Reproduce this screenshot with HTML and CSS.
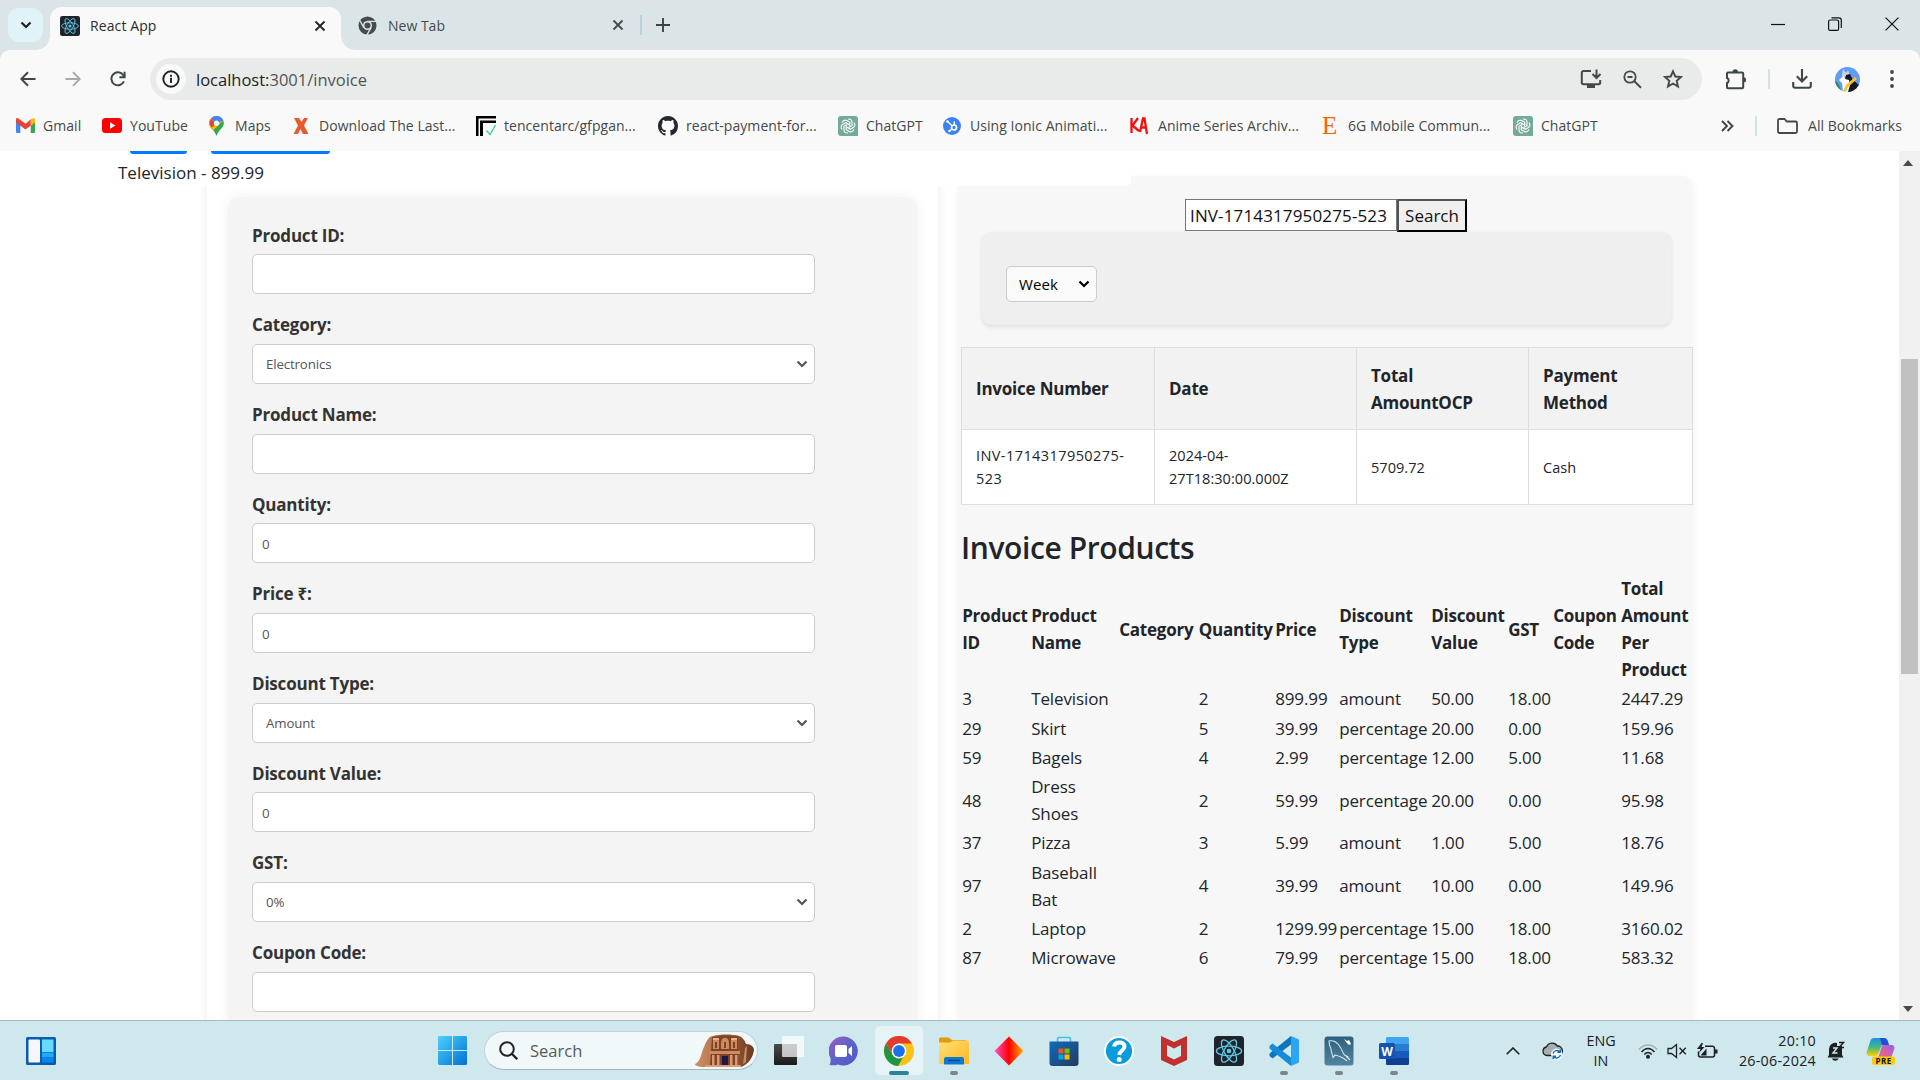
FILE: index.html
```html
<!DOCTYPE html>
<html lang="en">
<head>
<meta charset="utf-8">
<title>React App</title>
<link rel="stylesheet" href="styles.css">
</head>
<body>
<svg class="defs" width="0" height="0">
  <defs>
    <linearGradient id="g-win" x1="0" y1="0" x2="1" y2="1"><stop offset="0" stop-color="#4cd1fb"/><stop offset="1" stop-color="#0070d4"/></linearGradient>
    <linearGradient id="g-chat" x1="0" y1="0" x2="1" y2="1"><stop offset="0" stop-color="#a05ac0"/><stop offset=".5" stop-color="#5b63cc"/><stop offset="1" stop-color="#5656c8"/></linearGradient>
    <linearGradient id="g-dia" x1="0" y1="0" x2="1" y2="0"><stop offset="0" stop-color="#ff4fc8"/><stop offset=".5" stop-color="#ff0000"/><stop offset="1" stop-color="#ffb400"/></linearGradient>
    <linearGradient id="g-fold" x1="0" y1="0" x2="1" y2="1"><stop offset="0" stop-color="#ffe07a"/><stop offset="1" stop-color="#fdb81e"/></linearGradient>
    <linearGradient id="g-store" x1="0" y1="0" x2="1" y2="1"><stop offset="0" stop-color="#0f6cbd"/><stop offset="1" stop-color="#243a5e"/></linearGradient>
    <linearGradient id="g-sql" x1="0" y1="0" x2="0" y2="1"><stop offset="0" stop-color="#2d5f7e"/><stop offset="1" stop-color="#5383a0"/></linearGradient>
    <linearGradient id="g-rock" x1="0" y1="0" x2="1" y2="0"><stop offset="0" stop-color="#d29068"/><stop offset=".5" stop-color="#a5653e"/><stop offset="1" stop-color="#6a3a22"/></linearGradient>
    <linearGradient id="g-cop1" x1="0" y1="0" x2="0" y2="1"><stop offset="0" stop-color="#1c8fe8"/><stop offset=".5" stop-color="#3fb984"/><stop offset="1" stop-color="#ffd000"/></linearGradient>
    <linearGradient id="g-cop2" x1="1" y1="0" x2="0" y2="1"><stop offset="0" stop-color="#9a5cf0"/><stop offset="1" stop-color="#ff6a60"/></linearGradient>
    <linearGradient id="g-task" x1="0" y1="0" x2="0" y2="1"><stop offset="0" stop-color="#4a4a4a"/><stop offset="1" stop-color="#1a1a1a"/></linearGradient>
    <symbol id="react" viewBox="0 0 30 30">
      <rect width="30" height="30" rx="3.5" fill="#20232a"/>
      <g fill="none" stroke="#5cc8e6" stroke-width="1.3"><ellipse cx="15" cy="15" rx="12.6" ry="4.8"/><ellipse cx="15" cy="15" rx="12.6" ry="4.8" transform="rotate(60 15 15)"/><ellipse cx="15" cy="15" rx="12.6" ry="4.8" transform="rotate(120 15 15)"/></g>
      <circle cx="15" cy="15" r="2.3" fill="#5cc8e6"/>
    </symbol>
    <symbol id="gpt" viewBox="0 0 20 20">
      <path d="M3 0h14a3 3 0 0 1 3 3v17H3a3 3 0 0 1-3-3V3a3 3 0 0 1 3-3z" fill="#74aa9c"/>
      <g fill="none" stroke="#fff" stroke-width="1.1">
        <path d="M10 3.2c2.2-.6 4 .9 4 2.9v3.6L10.6 11.6"/>
        <path d="M10 3.2c2.2-.6 4 .9 4 2.9v3.6L10.6 11.6" transform="rotate(60 10 10)"/>
        <path d="M10 3.2c2.2-.6 4 .9 4 2.9v3.6L10.6 11.6" transform="rotate(120 10 10)"/>
        <path d="M10 3.2c2.2-.6 4 .9 4 2.9v3.6L10.6 11.6" transform="rotate(180 10 10)"/>
        <path d="M10 3.2c2.2-.6 4 .9 4 2.9v3.6L10.6 11.6" transform="rotate(240 10 10)"/>
        <path d="M10 3.2c2.2-.6 4 .9 4 2.9v3.6L10.6 11.6" transform="rotate(300 10 10)"/>
      </g>
    </symbol>
    <symbol id="chev" viewBox="0 0 12 8"><path d="M1.5 1.5L6 6l4.500-4.500" fill="none" stroke="currentColor" stroke-width="2.200"/></symbol>
    <symbol id="x" viewBox="0 0 12 12"><path d="M1.500 1.500l9 9M10.500 1.500l-9 9" fill="none" stroke="currentColor" stroke-width="1.800"/></symbol>
  </defs>
</svg>

<header class="tabs">
  <button class="tab-search"><svg width="12" height="8"><use href="#chev"/></svg></button>
  <div class="tab active">
    <svg width="20" height="20"><use href="#react"/></svg>
    <span class="tab-title t-react">React App</span>
    <svg class="tab-x" width="12" height="12"><use href="#x"/></svg>
  </div>
  <div class="tab idle">
    <svg width="19" height="19" viewBox="0 0 20 20"><circle cx="10" cy="10" r="9.500" fill="#474b4d"/><circle cx="10" cy="10" r="4.800" fill="#dbe5e7"/><circle cx="10" cy="10" r="3.200" fill="#474b4d"/><path d="M10 5.600h9M6.200 12.300L1.700 4.500M13.800 12.300l-4.500 7.800" stroke="#dbe5e7" stroke-width="1.400"/></svg>
    <span class="tab-title">New Tab</span>
    <svg class="tab-x" width="12" height="12"><use href="#x"/></svg>
  </div>
  <i class="tab-sep"></i>
  <svg class="plus" width="14" height="14" viewBox="0 0 14 14"><path d="M7 0v14M0 7h14" stroke="#3c4345" stroke-width="1.900"/></svg>
  <div class="win">
    <svg width="14" height="14" viewBox="0 0 14 14"><path d="M0 7.500h14" stroke="#111" stroke-width="1.200"/></svg>
    <svg width="14" height="14" viewBox="0 0 14 14"><rect x=".6" y="3" width="10" height="10.400" rx="1.500" fill="none" stroke="#111" stroke-width="1.200"/><path d="M3.500.8h7.500a2.300 2.300 0 0 1 2.300 2.300V11" fill="none" stroke="#111" stroke-width="1.200"/></svg>
    <svg width="14" height="14" viewBox="0 0 14 14"><path d="M.6.600l12.800 12.800M13.400.600L.6 13.400" stroke="#111" stroke-width="1.200"/></svg>
  </div>
</header>

<nav class="toolbar">
  <svg class="nav" width="16" height="16" viewBox="0 0 16 16"><path d="M15.500 8H1.500M8 1.200L1.300 8 8 14.800" fill="none" stroke="#3e4748" stroke-width="2"/></svg>
  <svg class="nav" width="16" height="16" viewBox="0 0 16 16"><path d="M.5 8h14M8 1.200L14.700 8 8 14.800" fill="none" stroke="#a6aaab" stroke-width="1.900"/></svg>
  <svg class="nav" width="16" height="16" viewBox="0 0 16 16"><path d="M13.900 10.300A6.500 6.500 0 1 1 13.300 4.200L14.800 6" fill="none" stroke="#3e4748" stroke-width="2"/><path d="M15.600.7v6.500H9.400v-2h4.200V.7z" fill="#3e4748"/></svg>
  <div class="omnibox">
    <span class="info"><svg width="18" height="18" viewBox="0 0 18 18"><circle cx="9" cy="9" r="7.700" fill="none" stroke="#1f2324" stroke-width="1.900"/><path d="M9 7.800v5.200M9 4.700v2" stroke="#1f2324" stroke-width="1.900"/></svg></span>
    <span class="url">localhost:<em>3001/invoice</em></span>
    <svg width="22" height="20" viewBox="0 0 22 20"><path d="M11 2H3.500A1.700 1.700 0 0 0 1.800 3.700v9.800a1.700 1.700 0 0 0 1.700 1.700h15a1.700 1.700 0 0 0 1.700-1.700V11M16.500.5v8M12.500 5l4 4 4-4" fill="none" stroke="#444849" stroke-width="2"/><path d="M7 15h8v4H7z" fill="#444849"/></svg>
    <svg width="19" height="19" viewBox="0 0 19 19"><circle cx="7" cy="7" r="5.700" fill="none" stroke="#444849" stroke-width="1.800"/><path d="M4.500 7h5M11.300 11.300l6.700 6.500" stroke="#444849" stroke-width="1.900"/></svg>
    <svg width="20" height="20" viewBox="0 0 20 20"><path d="M10 2.300l2.300 5.200 5.700.500-4.300 3.800 1.300 5.700-5-3-5 3 1.300-5.700L2 8l5.700-.500z" fill="none" stroke="#444849" stroke-width="1.900"/></svg>
  </div>
  <svg class="puzzle" width="22" height="22" viewBox="0 0 22 22"><path d="M3 4.500h14.200a1 1 0 0 1 1 1v13.700a1 1 0 0 1-1 1H3a1 1 0 0 1-1-1v-4.200a2.700 2.700 0 0 0 0-5V5.500a1 1 0 0 1 1-1z" fill="none" stroke="#3e4748" stroke-width="2"/><path d="M7.500 4a2.700 2.700 0 0 1 5.400 0zM18.500 9.200a2.600 2.600 0 0 1 0 5.200z" fill="#3e4748"/></svg>
  <i class="bar-sep"></i>
  <svg class="dl" width="20" height="20" viewBox="0 0 20 20"><path d="M10 0v12M4.800 7.300L10 12.500l5.200-5.200M1.200 13v3.700a2 2 0 0 0 2 2h13.600a2 2 0 0 0 2-2V13" fill="none" stroke="#3e4748" stroke-width="2.100"/></svg>
  <svg class="avatar" width="25" height="25" viewBox="0 0 25 25"><defs><clipPath id="av"><circle cx="12.500" cy="12.500" r="12.500"/></clipPath></defs><g clip-path="url(#av)"><path fill="#5f9cf5" d="M0 0h25v25H0z"/><path fill="#2e8b57" d="M0 14l3 2 4 9H0z"/><path fill="#cfd6da" d="M7 9l1-7 3 4 2-3 2 6z"/><path fill="#16191c" d="M11 8l4-1 3 6 6 5v7H12l2-9-4-3z"/><path fill="#fff" d="M9 8l-5 5 3 3 1 9h5l2-7-1-5-4-1z"/><path fill="#ffc02e" d="M20 10l2 2-9 8-2 5-3-1 3-6z"/></g></svg>
  <svg class="dots" width="4" height="18" viewBox="0 0 4 18"><g fill="#3e4748"><circle cx="2" cy="2" r="1.900"/><circle cx="2" cy="9" r="1.900"/><circle cx="2" cy="16" r="1.900"/></g></svg>
</nav>

<nav class="bookmarks">
  <a><svg width="19" height="15" viewBox="0 0 19 15"><path d="M0 2v11.500A1.300 1.300 0 0 0 1.300 15H4.300V6z" fill="#4285f4"/><path d="M19 2v11.500a1.300 1.300 0 0 1-1.300 1.500h-3V6z" fill="#34a853"/><path d="M14.700 1.300L17 .200A1.500 1.500 0 0 1 19 2v2.400L14.700 7.700z" fill="#fbbc04"/><path d="M0 2A1.500 1.500 0 0 1 2.500.5l7 5.200 5.200-4.200v6.200L9.500 11.500 0 4.400z" fill="#ea4335"/></svg><span>Gmail</span></a>
  <a><svg width="20" height="15" viewBox="0 0 20 15"><rect width="20" height="15" rx="3.500" fill="#f00"/><path d="M8 4.200l5.500 3.300L8 10.800z" fill="#fff"/></svg><span>YouTube</span></a>
  <a><svg width="15" height="20" viewBox="0 0 15 20"><path d="M7.500 0a7.300 7.300 0 0 1 7.300 7.300c0 5-5 6-7.300 12.700C5.200 13.300.2 12.300.2 7.300A7.300 7.300 0 0 1 7.500 0z" fill="#34a853"/><path d="M7.500 0a7.300 7.300 0 0 1 6.800 4.500L4 14.500C2 12 .2 11 .2 7.300A7.300 7.300 0 0 1 7.500 0z" fill="#fbbc04"/><path d="M1.800 2.800L7 7.500 3 11.500C.5 9-.5 6 1.800 2.800z" fill="#ea4335"/><path d="M1.800 2.800A7.300 7.300 0 0 1 14.300 4.500L7.500 7.500z" fill="#4285f4"/><circle cx="7.500" cy="7.200" r="2.600" fill="#fff"/></svg><span>Maps</span></a>
  <a><svg width="16" height="16" viewBox="0 0 16 16"><path d="M1 0h5l2.500 4L11 0h4l-4 7.500L15.500 16H10L7.500 11 5 16H.5L5 7.500z" fill="#e65a2b"/></svg><span>Download The Last...</span></a>
  <a><svg width="20" height="20" viewBox="0 0 20 20"><path d="M0 0h20v2.500H2.500V20H0z" fill="#000"/><path d="M4 4.500h16V7H7v13H4z" fill="#000"/><path d="M10.500 14.500l3.500 4 5.500-9.500" fill="none" stroke="#42d392" stroke-width="1.400"/></svg><span>tencentarc/gfpgan...</span></a>
  <a><svg width="20" height="20" viewBox="0 0 16 16"><path fill="#24292f" d="M8 0C3.580 0 0 3.580 0 8c0 3.540 2.290 6.530 5.470 7.590.4.070.55-.170.55-.380 0-.190-.010-.820-.010-1.490-2.010.370-2.530-.490-2.690-.940-.090-.230-.480-.940-.820-1.130-.280-.150-.680-.520-.010-.530.630-.010 1.080.580 1.230.820.720 1.210 1.870.870 2.330.660.070-.520.280-.870.510-1.070-1.780-.200-3.640-.890-3.640-3.950 0-.870.310-1.590.820-2.150-.080-.200-.360-1.020.080-2.120 0 0 .67-.210 2.200.820.640-.180 1.320-.270 2-.270s1.360.090 2 .270c1.530-1.040 2.200-.820 2.200-.820.440 1.100.16 1.920.080 2.120.51.560.82 1.270.82 2.150 0 3.070-1.870 3.750-3.650 3.950.29.250.54.730.54 1.480 0 1.070-.010 1.930-.010 2.200 0 .210.15.460.55.380A8 8 0 0 0 16 8c0-4.420-3.580-8-8-8z"/></svg><span>react-payment-for...</span></a>
  <a><svg width="20" height="20"><use href="#gpt"/></svg><span>ChatGPT</span></a>
  <a><svg width="18" height="18" viewBox="0 0 18 18"><circle cx="9" cy="9" r="9" fill="#3b82f6"/><circle cx="11" cy="10.500" r="2.500" fill="none" stroke="#fff" stroke-width="1.700"/><path d="M4.500 4.500L9 8.700M11.300 4.500V8M6.500 14l2.500-2" stroke="#fff" stroke-width="1.500"/><circle cx="4.500" cy="4.500" r="1.300" fill="#fff"/><circle cx="6.400" cy="14" r="1.200" fill="#fff"/></svg><span>Using Ionic Animati...</span></a>
  <a><svg width="18" height="18" viewBox="0 0 18 18"><path d="M1.500 1v15M8 1L2.500 8.500 9 14M10 15l3-13.500h1.500L17 17M11 10.500h5" fill="none" stroke="#f01010" stroke-width="2.300"/></svg><span>Anime Series Archiv...</span></a>
  <a><b class="etsy">E</b><span>6G Mobile Commun...</span></a>
  <a><svg width="20" height="20"><use href="#gpt"/></svg><span>ChatGPT</span></a>
  <svg class="more" width="13" height="12" viewBox="0 0 13 12"><path d="M1 1l5 5-5 5M6.500 1l5 5-5 5" fill="none" stroke="#3e4748" stroke-width="1.900"/></svg>
  <i class="bm-sep"></i>
  <a><svg width="21" height="16" viewBox="0 0 21 16"><path d="M2.500 1h5l2.300 2.500h8.700A1.500 1.500 0 0 1 20 5v8.500a1.500 1.500 0 0 1-1.500 1.500h-16A1.500 1.500 0 0 1 1 13.500v-11A1.500 1.500 0 0 1 2.500 1z" fill="none" stroke="#444849" stroke-width="1.800"/></svg><span>All Bookmarks</span></a>
</nav>

<div class="viewport">
  <main class="page">
    <div class="buttons"><i></i><i></i></div>
    <div class="suggestion">Television - 899.99</div>
    <div class="columns">
      <section class="left-card">
        <form class="form">
          <label>Product ID:</label><input type="text">
          <label>Category:</label><div class="select">Electronics<svg width="12" height="8"><use href="#chev"/></svg></div>
          <label>Product Name:</label><input type="text">
          <label>Quantity:</label><input type="text" value="0">
          <label>Price ₹:</label><input type="text" value="0">
          <label>Discount Type:</label><div class="select">Amount<svg width="12" height="8"><use href="#chev"/></svg></div>
          <label>Discount Value:</label><input type="text" value="0">
          <label>GST:</label><div class="select">0%<svg width="12" height="8"><use href="#chev"/></svg></div>
          <label>Coupon Code:</label><input type="text">
        </form>
      </section>
      <section class="right-card">
        <div class="search"><input type="text" value="INV-1714317950275-523"><button>Search</button></div>
        <div class="filter"><div class="period">Week<svg width="12" height="8"><use href="#chev"/></svg></div></div>
        <table class="invoices">
          <colgroup><col class="i1"><col class="i2"><col class="i3"><col class="i4"></colgroup>
          <tr><th>Invoice Number</th><th>Date</th><th>Total<br>AmountOCP</th><th>Payment<br>Method</th></tr>
          <tr><td class="number">INV-1714317950275-<br>523</td><td>2024-04-<br>27T18:30:00.000Z</td><td>5709.72</td><td>Cash</td></tr>
        </table>
        <h2>Invoice Products</h2>
        <table class="products">
          <colgroup><col class="p1"><col class="p2"><col class="p3"><col class="p4"><col class="p5"><col class="p6"><col class="p7"><col class="p8"><col class="p9"><col class="p10"></colgroup>
          <tr><th>Product<br>ID</th><th>Product<br>Name</th><th>Category</th><th>Quantity</th><th>Price</th><th>Discount<br>Type</th><th>Discount<br>Value</th><th>GST</th><th>Coupon<br>Code</th><th>Total<br>Amount<br>Per<br>Product</th></tr>
          <tr><td>3</td><td>Television</td><td></td><td>2</td><td>899.99</td><td>amount</td><td>50.00</td><td>18.00</td><td></td><td>2447.29</td></tr>
          <tr><td>29</td><td>Skirt</td><td></td><td>5</td><td>39.99</td><td>percentage</td><td>20.00</td><td>0.00</td><td></td><td>159.96</td></tr>
          <tr><td>59</td><td>Bagels</td><td></td><td>4</td><td>2.99</td><td>percentage</td><td>12.00</td><td>5.00</td><td></td><td>11.68</td></tr>
          <tr><td>48</td><td>Dress<br>Shoes</td><td></td><td>2</td><td>59.99</td><td>percentage</td><td>20.00</td><td>0.00</td><td></td><td>95.98</td></tr>
          <tr><td>37</td><td>Pizza</td><td></td><td>3</td><td>5.99</td><td>amount</td><td>1.00</td><td>5.00</td><td></td><td>18.76</td></tr>
          <tr><td>97</td><td>Baseball<br>Bat</td><td></td><td>4</td><td>39.99</td><td>amount</td><td>10.00</td><td>0.00</td><td></td><td>149.96</td></tr>
          <tr><td>2</td><td>Laptop</td><td></td><td>2</td><td>1299.99</td><td>percentage</td><td>15.00</td><td>18.00</td><td></td><td>3160.02</td></tr>
          <tr><td>87</td><td>Microwave</td><td></td><td>6</td><td>79.99</td><td>percentage</td><td>15.00</td><td>18.00</td><td></td><td>583.32</td></tr>
        </table>
      </section>
    </div>
  </main>
  <aside class="scroll">
    <svg width="10" height="6" viewBox="0 0 10 6"><path d="M5 0l5 6H0z" fill="#4a4a4a"/></svg>
    <i></i>
    <svg width="10" height="6" viewBox="0 0 10 6"><path d="M0 0h10L5 6z" fill="#4a4a4a"/></svg>
  </aside>
</div>

<footer class="taskbar">
  <svg class="widgets" width="30" height="28" viewBox="0 0 30 28"><rect width="30" height="28" rx="1.500" fill="#0a5cad"/><rect x="2.500" y="2.500" width="11.500" height="23" rx="1" fill="#f5f7f9"/><path d="M16 2.500h11.500v12.500H16z" fill="#66d9ff"/><path d="M16 15.500h11.500v5H16z" fill="#22a7ff"/><path d="M16 21h11.500v4.500H16z" fill="#0a84f0"/></svg>
  <svg class="start" width="29" height="29" viewBox="0 0 29 29"><path d="M1 0h13v14H0V1zM15 0h13l1 1v13H15zM0 15h14v14H1l-1-1zM15 15h14v13l-1 1H15z" fill="url(#g-win)"/></svg>
  <div class="finder">
    <svg width="19" height="19" viewBox="0 0 19 19"><circle cx="8" cy="8" r="6.800" fill="none" stroke="#222" stroke-width="2"/><path d="M12.800 12.800l5.400 5.400" stroke="#222" stroke-width="2.300"/></svg>
    <span>Search</span>
    <svg class="petra" width="60" height="34" viewBox="0 0 60 34"><path d="M0 30c6-3 6-11 9-17C12 5 15 2 18 2c6-2 20-2 26 0 3 1 6 4 7 8 5 0 8 3 8 6-1 7-5 14-13 17H9c-5 0-9-1-9-3z" fill="url(#g-rock)"/><path d="M17 3l13-2 13 2v29H15z" fill="#7d4326"/><path d="M18 4h6v11h-6zM36 4h6v11h-6zM26 9c0-7 8-7 8 0v6h-8zM14 17h31v3H14z" fill="#d08a60"/><path d="M20 8h2v6h-2zM38 8h2v6h-2zM29 8h2v6h-2z" fill="#7d4326"/><path d="M18 4h6v2h-6zM36 4h6v2h-6z" fill="#efb088"/><path d="M17 21h2.500v11H17zM22 21h2.500v11H22zM35 21h2.500v11H35zM40 21h2.500v11H40z" fill="#dc9870"/><path d="M27 22h6v9h-6z" fill="#1f1748"/><path d="M10 31h36v2H10z" fill="#df9b6e"/><path d="M50 14l2-2-1 16-3 2z" fill="#c98962"/></svg>
  </div>
  <div class="apps">
    <span><svg width="30" height="30" viewBox="0 0 30 30"><rect x="0" y="8" width="23" height="21" rx="1" fill="url(#g-task)"/><rect x="8" y="0" width="22" height="21" rx="1" fill="#fff" opacity=".72"/></svg></span>
    <span><svg width="30" height="30" viewBox="0 0 30 30"><path d="M15 .5A14.500 14.500 0 1 1 9 28.500c-3 1-6 1-8.500.5 1-2 1.300-4 1-7A14.500 14.500 0 0 1 15 .5z" fill="url(#g-chat)"/><rect x="6" y="9" width="12" height="12" rx="2" fill="#fff"/><path d="M19.500 13l3.500-3v10l-3.500-3z" fill="#fff"/></svg></span>
    <span class="current"><svg width="30" height="30" viewBox="0 0 30 30"><circle cx="15" cy="15" r="15" fill="#fbc116"/><path d="M15 15L8.500 19 2 7.500A15 15 0 0 0 14 30l6.700-11.500z" fill="#1e9544"/><path d="M2 7.500A15 15 0 0 1 28 7.500H15L8.500 18.700z" fill="#e33b2e"/><circle cx="15" cy="15" r="7.400" fill="#fff"/><circle cx="15" cy="15" r="5.900" fill="#1a73e8"/></svg></span>
    <span class="open"><svg width="30" height="28" viewBox="0 0 30 28"><path d="M0 5V2a1.500 1.500 0 0 1 1.500-1.500h8L13 3h14v5H0z" fill="#e19a08"/><path d="M0 5.500h11l3-2h14.500A1.500 1.500 0 0 1 30 5v21a1 1 0 0 1-1 1H1a1 1 0 0 1-1-1z" fill="url(#g-fold)"/><path d="M5 27.500V22a2 2 0 0 1 2-2h16a2 2 0 0 1 2 2v5.500z" fill="#0f78d0"/><path d="M9 23.500h12" stroke="#0a4d8f" stroke-width="1.500"/></svg></span>
    <span><svg width="30" height="30" viewBox="0 0 30 30"><path d="M15 .5L29.500 15 15 29.500.5 15z" fill="url(#g-dia)"/></svg></span>
    <span><svg width="30" height="30" viewBox="0 0 30 30"><path d="M8.500 8V3A1.500 1.500 0 0 1 10 1.500h10A1.500 1.500 0 0 1 21.500 3v5" fill="none" stroke="#3cc3f5" stroke-width="1.600"/><path d="M.5 5.500h29V27a3 3 0 0 1-3 3h-23a3 3 0 0 1-3-3z" fill="url(#g-store)"/><path d="M9.500 12.500h5v5h-5z" fill="#f25022"/><path d="M15.500 12.500h5v5h-5z" fill="#7fba00"/><path d="M9.500 18.500h5v5h-5z" fill="#00a4ef"/><path d="M15.500 18.500h5v5h-5z" fill="#ffb900"/></svg></span>
    <span><svg width="30" height="30" viewBox="0 0 30 30"><circle cx="15" cy="15" r="14" fill="#0a9bdc" stroke="#fff" stroke-width="1.800"/><path d="M10 10.500c1-5.500 10.500-5.500 10.500 0 0 4-5 4-5.300 8.500" fill="none" stroke="#fff" stroke-width="4"/><circle cx="15.200" cy="23.500" r="2.500" fill="#fff"/></svg></span>
    <span><svg width="28" height="30" viewBox="0 0 28 30"><path d="M1 0l13 6L27 0v24l-13 6-13-6zM7 9v11l7 3.500 7-3.500V9l-7 3.500z" fill="#c0302c" fill-rule="evenodd"/></svg></span>
    <span><svg width="30" height="30"><use href="#react"/></svg></span>
    <span class="open"><svg width="30" height="30" viewBox="0 0 30 30"><path d="M22 0v8.500L3.500 22.500.5 20v-2.500L22 0z" fill="#0d76bd"/><path d="M22 30v-8.500L3.500 7.500.5 10v2.500L22 30z" fill="#168cd8"/><path d="M22 0l7 3a1.500 1.500 0 0 1 1 1.500v21a1.500 1.500 0 0 1-1 1.500l-7 3z" fill="#2ba6f2"/></svg></span>
    <span class="open"><svg width="30" height="30" viewBox="0 0 30 30"><rect x=".5" y=".5" width="29" height="29" rx="3" fill="url(#g-sql)"/><path d="M4.500 5c5-1 9 2 11 5 3 4 3 7 5 9l4 2M9 22c0-3-2-5-2-9M5 5c0 4 1 6 2 8M9 22l2-3c4 1 8 2 12 6M22 20l4 4" fill="none" stroke="#d9e6ee" stroke-width="1.100"/><path d="M20 3l2 3 3 3 2-1-2-4-2 1z" fill="#fff"/></svg></span>
    <span class="open"><svg width="30" height="28" viewBox="0 0 30 28"><path d="M8 0h20.500A1.500 1.500 0 0 1 30 1.500V7H7V1z" fill="#41a5ee"/><path d="M7 7h23v7H7z" fill="#2b7cd3"/><path d="M7 14h23v7H7z" fill="#185abd"/><path d="M7 21h23v5.500a1.500 1.500 0 0 1-1.500 1.500H8a1 1 0 0 1-1-1z" fill="#103f91"/><rect y="6" width="16" height="16" rx="1.500" fill="#1652b0"/><text x="8" y="18.500" text-anchor="middle" class="word">W</text></svg></span>
  </div>
  <div class="tray">
    <svg class="up" width="14" height="8" viewBox="0 0 14 8"><path d="M.7 7.300L7 1l6.300 6.300" fill="none" stroke="#1b2023" stroke-width="1.600"/></svg>
    <svg class="cloud" width="21" height="18" viewBox="0 0 21 18"><path d="M5 13.500a4.300 4.300 0 0 1-.5-8.500 6 6 0 0 1 10.800-1A4.700 4.700 0 0 1 16 13.500z" fill="#a8adb0" stroke="#1d2225" stroke-width="1.300"/><circle cx="14.700" cy="12.200" r="5.600" fill="#fff"/><path d="M11 11.500a4 4 0 0 1 7-1.500M18.500 12.800a4 4 0 0 1-7 1.700M18.300 7.500V10.300h-2.800M11.200 17v-2.800H14" fill="none" stroke="#1668b8" stroke-width="1.400"/></svg>
    <div class="lang">ENG<br>IN</div>
    <svg class="wifi" width="20" height="16" viewBox="0 0 20 16"><path d="M1 6.500c5-6 13-6 18 0" fill="none" stroke="#9fb2b8" stroke-width="1.500"/><path d="M3.500 9c4-4.700 9-4.700 13 0M6.300 11.500c2.400-2.700 5-2.700 7.400 0" fill="none" stroke="#1b2023" stroke-width="1.500"/><circle cx="10" cy="13.800" r="2" fill="#1b2023"/></svg>
    <svg class="sound" width="20" height="16" viewBox="0 0 20 16"><path d="M1 5.500h3.500L9.500 1.500v13l-5-4H1z" fill="none" stroke="#1b2023" stroke-width="1.300"/><path d="M12.500 4.700l6.300 6.500M18.800 4.700l-6.300 6.500" stroke="#1b2023" stroke-width="1.300"/></svg>
    <svg class="battery" width="21" height="16" viewBox="0 0 21 16"><path d="M8 3.200h7.500a2 2 0 0 1 2 2V12a2 2 0 0 1-2 2H3.500a2 2 0 0 1-2-2V8.500" fill="none" stroke="#1b2023" stroke-width="1.500"/><path d="M18 6.500h2.500v4H18zM4.500 0L0 6h3.500L2 10l5.500-6H4.500L6 0zM3.500 12.500l6-7v7z" fill="#1b2023"/></svg>
    <div class="clock">20:10<br>26-06-2024</div>
    <svg class="bell" width="18" height="20" viewBox="0 0 18 20"><path d="M2 14V8a6.500 6.500 0 0 1 8-6v3h5v9l1.500 2.500H.5zM5 17.500h6.500c-1 3-5.500 3-6.500 0z" fill="#1b2023"/><path d="M12 1.500h4.500L12 6.500h5" fill="none" stroke="#1b2023" stroke-width="1.500"/><path d="M6 7h4l-4 5h4.500" fill="none" stroke="#cfe8ee" stroke-width="1.400"/></svg>
    <svg class="copilot" width="29" height="28" viewBox="0 0 29 28"><path d="M8 1h10c2 0 3 1 4 4l1 3h-5c-3 0-3 2-4 5l-2 4c-1 2-2 2-4 2H4c-3 0-4-2-3-5l3-9c1-3 2-4 4-4z" fill="url(#g-cop1)"/><path d="M14 1h4c2 0 3 1 4 4l1 3h-7z" fill="#2350d8"/><path d="M18 8h7c3 0 4 2 3 5l-3 8H12l3-9c1-3 1-4 3-4z" fill="url(#g-cop2)"/><rect x="6" y="19.500" width="23" height="8.500" rx="2" fill="#ffc90e"/><text x="17.700" y="26.700" text-anchor="middle" class="pre">PRE</text></svg>
  </div>
</footer>
</body>
</html>
```
FILE: styles.css
```css
* { box-sizing: border-box; }
body {
  margin: 0;
  width: 1920px;
  height: 1080px;
  overflow: hidden;
  display: flex;
  flex-direction: column;
  background: #fff;
  font-family: "Open Sans", "Noto Sans", sans-serif;
  color: #212529;
}
svg { display: block; flex: none; }
.defs { position: absolute; }
i { flex: none; }

/* tab strip */
.tabs { height: 58px; margin-bottom: -8px; background: #dbe5e7; display: flex; align-items: flex-start; flex: none; }
.tab-search { width: 35px; height: 34px; margin: 8px 7px 0 8px; border: 0; padding: 0; border-radius: 11px; background: #e0f3f8; color: #1b2022; display: grid; place-items: center; }
.tab { display: flex; align-items: center; height: 43px; margin-top: 7px; padding-bottom: 7px; font-size: 14px; color: #454a4c; position: relative; }
.tab.active { width: 291px; padding-left: 10px; background: #f9f9f9; border-radius: 12px 12px 0 0; color: #2a2d2e; padding-bottom: 6px; }
.tab.active::before, .tab.active::after { content: ""; position: absolute; bottom: 0; width: 14px; height: 14px; }
.tab.active::before { left: -14px; background: radial-gradient(circle at 0 0, transparent 13.5px, #f9f9f9 14px); }
.tab.active::after { right: -14px; background: radial-gradient(circle at 100% 0, transparent 13.5px, #f9f9f9 14px); }
.tab.idle { width: 300px; padding-left: 17px; }
.tab-title { margin-left: 11px; white-space: nowrap; flex: 1; }
.t-react { margin-left: 10px; letter-spacing: .1px; }
.tab-x { margin-right: 15px; color: #1f2324; }
.idle .tab-x { margin-right: 17px; color: #45494b; }
.tab-sep { width: 2px; height: 20px; margin-top: 15px; background: #bdd2d8; margin-left: -1px; }
.plus { margin: 18px 0 0 14px; }
.win { display: flex; gap: 43px; margin: 17px 21px 0 auto; }

/* address row */
.toolbar { height: 50px; flex: none; background: #f9f9f9; border-radius: 10px 10px 0 0; position: relative; display: flex; align-items: center; padding: 8px 26px 0 20px; }
.nav { margin-right: 29px; }
.omnibox { width: 1552px; height: 42px; margin-left: -5px; border-radius: 21px; background: #e8ebea; display: flex; align-items: center; padding: 0 19px 0 6px; gap: 21px; }
.info { width: 30px; height: 30px; border-radius: 50%; background: #f9f9f9; display: grid; place-items: center; }
.url { flex: 1; margin-left: -11px; font-size: 16.500px; color: #1f2324; }
.url em { font-style: normal; color: #505456; }
.puzzle { margin-left: 23px; }
.bar-sep { width: 2px; height: 20px; margin: 0 22px 0 21px; background: #cde4ea; }
.avatar { margin-left: 23px; }
.dots { margin-left: 30px; }

/* bookmarks row */
.bookmarks {
  height: 51px; flex: none; background: #f9f9f9; padding-left: 16px; align-items: center;
  display: grid;
  grid-template-columns: 86px 107px 84px 183px 182px 180px 105px 187px 192px 191px 208px 34px 22px 130px;
}
.bookmarks a { display: flex; align-items: center; gap: 8px; white-space: nowrap; font-size: 14px; letter-spacing: .05px; color: #454849; }
.bookmarks a:nth-child(3) { gap: 11px; }
.bookmarks a:nth-child(4), .bookmarks a:nth-child(9), .bookmarks a:nth-child(10), .bookmarks a:last-child { gap: 10px; }
.bookmarks a:nth-child(8) { gap: 9px; }
.etsy { width: 16px; font: 25px/20px "Liberation Serif", serif; color: #f56400; }
.bm-sep { width: 2px; height: 20px; background: #cde4ea; }

/* web page */
.viewport { height: 869px; flex: none; display: flex; overflow: hidden; }
.page { width: 1899px; position: relative; font-size: 17px; line-height: 27px; letter-spacing: -0.1px; }
.buttons { display: flex; gap: 24px; padding-left: 130px; height: 3px; margin-bottom: 22px; }
.buttons i { background: #007bff; border-radius: 0 0 4px 4px; width: 57px; }
.buttons i + i { width: 119px; }
.suggestion { position: absolute; left: 118px; top: 8px; width: 1013px; height: 27px; background: #fff; border-radius: 5px; z-index: 2; letter-spacing: 0; }
.columns { display: flex; gap: 21px; padding-left: 207px; height: 900px; }
.left-card { width: 731px; padding: 21px 21px 0; background: #fff; border-radius: 9px; box-shadow: 0 0 11px rgba(0,0,0,.08); }
.form { height: 880px; padding: 24.500px 24px 0; background: #f4f4f4; border-radius: 11px; box-shadow: 0 0 14px rgba(0,0,0,.06); }
.form label { display: block; height: 27px; margin-bottom: 5.700px; font-weight: 700; color: #333; letter-spacing: -0.2px; }
.form input, .select { display: flex; align-items: center; width: 563px; height: 40px; margin: 0 0 17px; padding: 2px 9px 0; border: 1px solid #ccc; border-radius: 5px; background: #fff; font: 13.300px "Open Sans", sans-serif; color: #555; }
.select { padding: 0 6px 0 13px; justify-content: space-between; letter-spacing: -0.15px; }
.right-card { width: 734px; background: #f7f7f7; border-radius: 11px; padding: 23px 1px 0 2px; box-shadow: 0 3px 8px rgba(0,0,0,.06); }
.search { display: flex; height: 33px; padding-left: 224px; }
.search input { width: 212px; height: 32px; border: 1px solid #767676; padding: 0 4px; background: #fff; font: 17px "Open Sans", sans-serif; color: #111; letter-spacing: .14px; }
.search button { width: 70px; height: 33px; padding: 0; border: 2px outset #000; background: #efefef; font: 17px "Open Sans", sans-serif; color: #111; }
.filter { height: 93px; margin: 0 21px 22px; padding: 34px 24px; background: #efefef; border-radius: 9px; box-shadow: 0 2px 4px rgba(0,0,0,.1); }
.period { width: 91px; height: 36px; padding: 0 6px 0 12px; display: flex; align-items: center; justify-content: space-between; border: 1px solid #ccc; border-radius: 5px; background: #fafafa; color: #000; font-size: 15px; letter-spacing: .1px; }
table { border-collapse: collapse; table-layout: fixed; width: 731px; }
th { text-align: left; font-weight: 700; letter-spacing: -0.22px; }
.invoices { width: 730.500px; }
.invoices th, .invoices td { border: 1px solid #ddd; padding: 0 0 0 14px; }
.invoices th { height: 82px; background: #f2f2f2; }
.invoices td { height: 75px; background: #fff; font-size: 14.500px; line-height: 23px; letter-spacing: .05px; }
.invoices .number { letter-spacing: .42px; }
.i1 { width: 193px; } .i2 { width: 202px; } .i3 { width: 172px; } .i4 { width: 163.500px; }
h2 { margin: 23px 0 7px; font-size: 30px; line-height: 39px; font-weight: 600; letter-spacing: -0.4px; }
.products th, .products td { padding: 1.125px; white-space: nowrap; }
.p1 { width: 69px; } .p2 { width: 88px; } .p3 { width: 79.500px; } .p4 { width: 76.500px; } .p5 { width: 64px; }
.p6 { width: 92px; } .p7 { width: 77px; } .p8 { width: 45px; } .p9 { width: 68px; } .p10 { width: 72px; }

/* scrollbar */
.scroll { width: 21px; background: #f1f1f1; display: flex; flex-direction: column; align-items: center; padding: 9px 3px 8px 0; }
.scroll i { width: 17px; height: 315px; background: #c1c1c1; margin: 193px 0 auto 3px; }

/* taskbar */
.taskbar { height: 60px; flex: none; background: #cfe8ee; border-top: 1px solid #a9b8bd; display: flex; align-items: center; padding: 0 25px 0 26px; position: relative; z-index: 3; }
.start { margin: 0 17px 0 382px; }
.finder { width: 274px; height: 39px; border-radius: 20px; background: #f0f8fa; border: 1px solid #bdd3da; border-bottom-color: #a3b9c0; display: flex; align-items: center; padding: 0 2px 0 14px; font-size: 16.500px; color: #545b5e; }
.finder span { flex: 1; margin-left: 12px; }
.apps { display: flex; margin-left: 3px; }
.apps span { width: 55px; height: 59px; display: grid; place-items: center; position: relative; }
.current::before { content: ""; position: absolute; left: 3.500px; top: 5px; width: 48px; height: 49px; border-radius: 5px; background: #e6f3f7; }
.current svg { position: relative; }
.current::after, .open::after { content: ""; position: absolute; bottom: 5px; left: 23.500px; width: 8px; height: 4px; border-radius: 2px; background: #7a868a; }
.current::after { width: 20px; left: 17.500px; background: #2a8494; }
.word { font: bold 12px "Open Sans", sans-serif; fill: #fff; }
.tray { display: flex; align-items: center; margin-left: auto; font-size: 14.300px; line-height: 20px; color: #1b2023; }
.cloud { margin-left: 22px; }
.lang { width: 44px; margin-left: 16px; text-align: center; }
.wifi { margin-left: 15px; }
.sound { margin-left: 9px; }
.battery { margin-left: 10px; }
.clock { width: 98px; text-align: right; letter-spacing: .25px; }
.bell { margin-left: 11px; }
.copilot { margin-left: 21px; }
.pre { font: bold 8px "Open Sans", sans-serif; fill: #111; letter-spacing: .5px; }
```
